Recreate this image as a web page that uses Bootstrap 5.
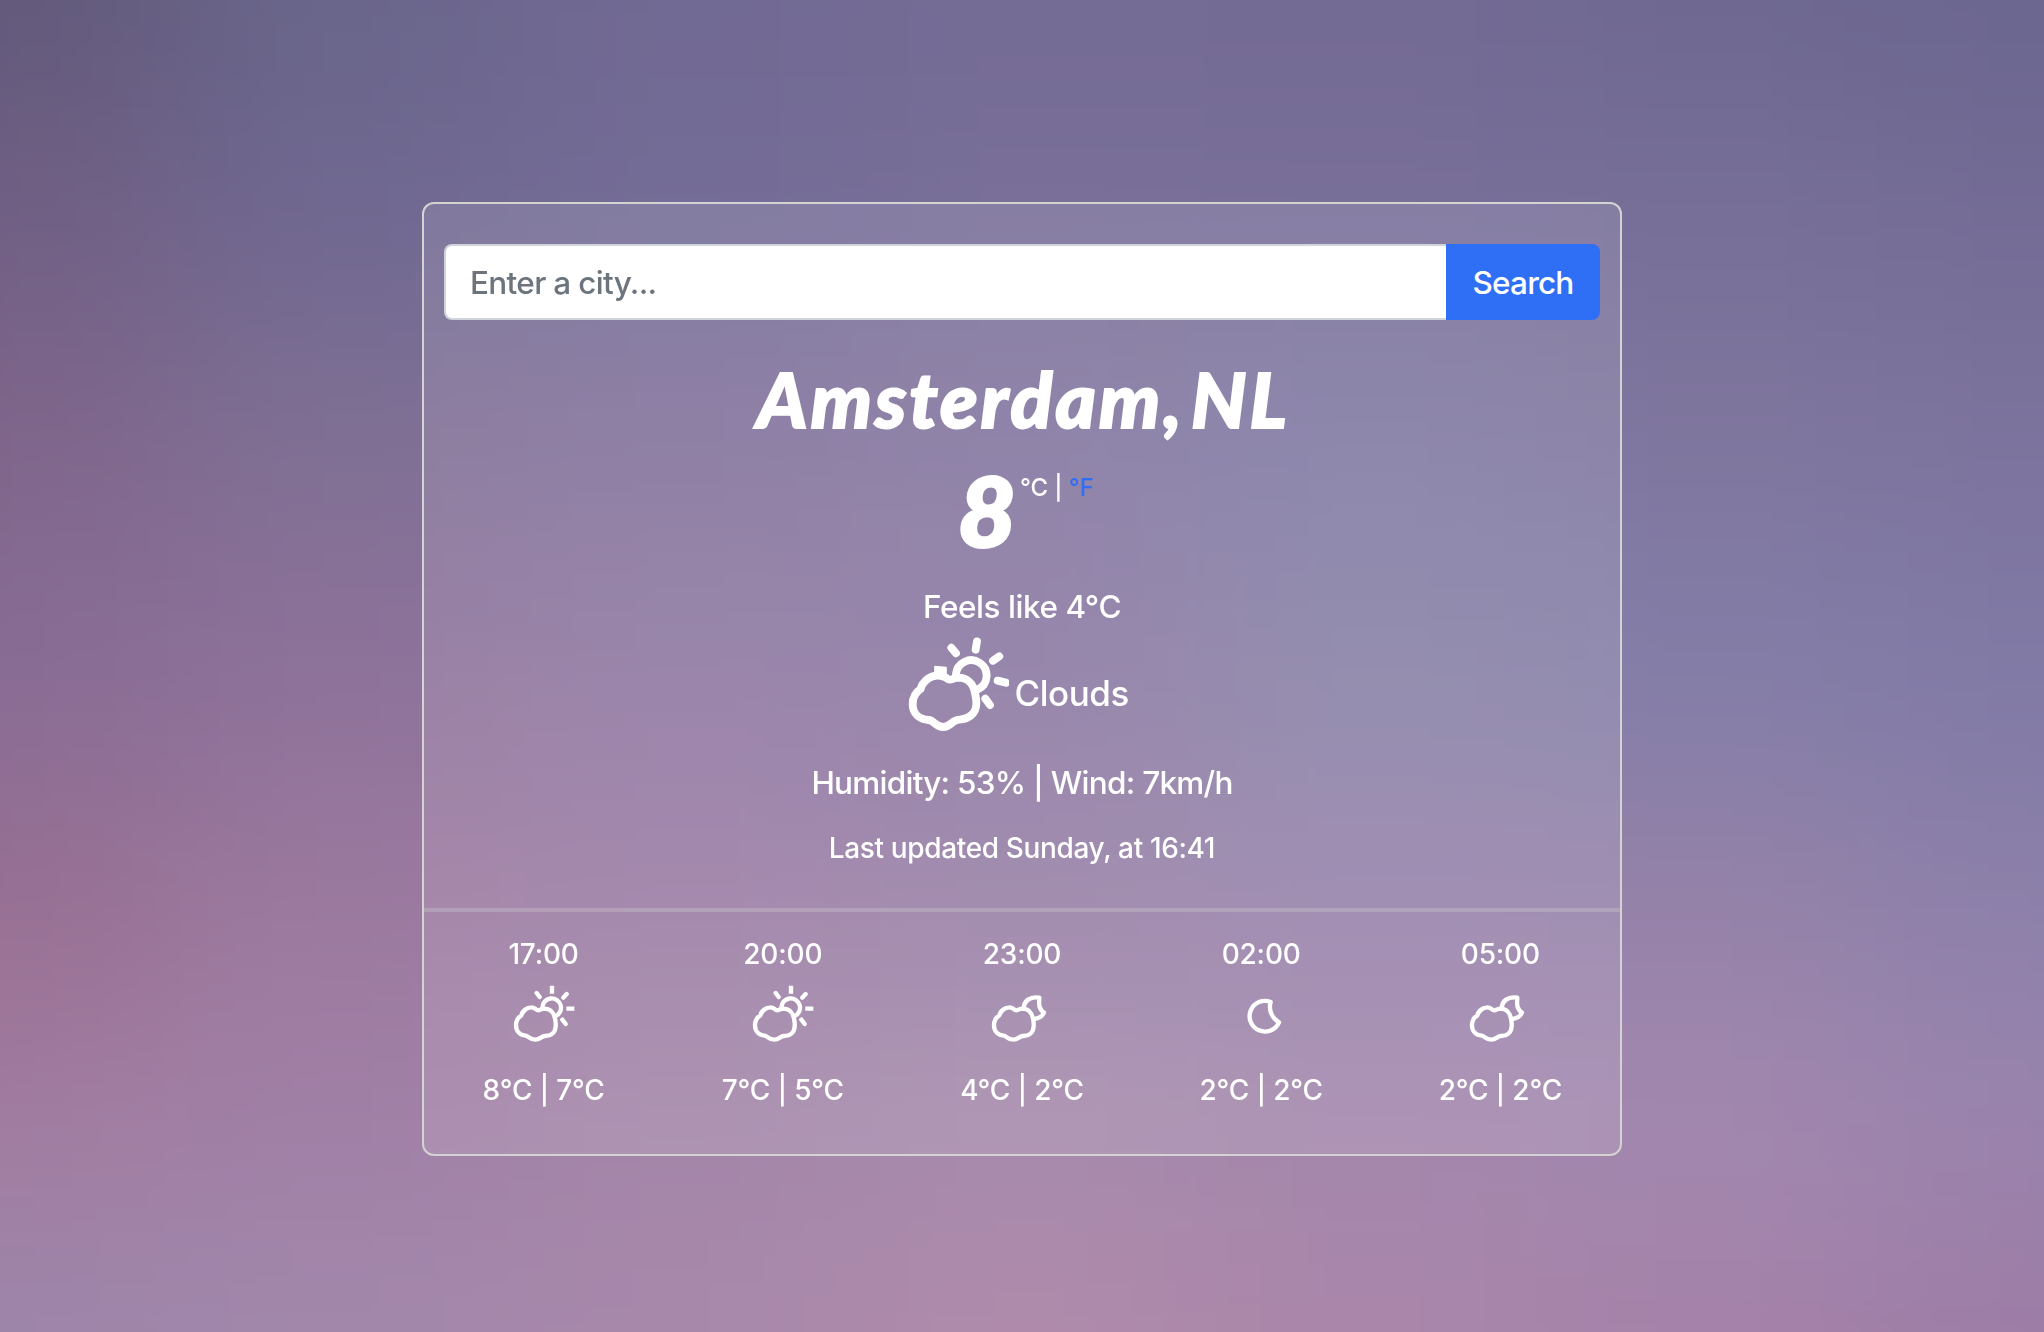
<!DOCTYPE html>
<html lang="en">
<head>
<meta charset="utf-8">
<meta name="viewport" content="width=device-width, initial-scale=1">
<title>Weather</title>
<link href="https://cdn.jsdelivr.net/npm/bootstrap@5.3.0/dist/css/bootstrap.min.css" rel="stylesheet">
<style>
  html { font-size: 32px; }
  body { font-family: Inter, "Liberation Sans", sans-serif; background: #8576a0; color: #fff; min-height: 100vh; overflow: hidden; font-size: 31.5px; font-weight: 450; line-height: 48px; letter-spacing: -.45px; }
  .sky { position: fixed; inset: 0; width: 100%; height: 100%; z-index: -1; }
  .weather-box { width: 1200px; height: 954px; margin: 202px auto 0; border: 2px solid #d3d3d3; border-radius: 12px; background: rgba(255,255,255,.11); }
  .search-row { margin: 40px 20px 0; width: 1156px; height: 76px; }
  .search-row .form-control { border: 2px solid #ced4da; border-right: 0; border-radius: 8px 0 0 8px; padding: 1px 24px 0; font-size: 31.5px; font-weight: 450; color: #212529; background: #fff; }
  .search-row .form-control::placeholder { color: #6c757d; opacity: 1; letter-spacing: -.68px; }
  .search-row .btn { width: 154px; background: #2f6ff5; border: 0; border-radius: 0 8px 8px 0; padding: 1px 0 0; font-size: 31.5px; font-weight: 450; letter-spacing: -.8px; }
  .city-name { font: italic 900 77px/96px Lato, sans-serif; letter-spacing: 3px; word-spacing: -13px; margin: 30px 0 0 3px; -webkit-text-stroke: 2px #fff; }
  .temp-row { padding-left: 9px; margin-top: 12px; }
  .temp-now { font: italic 900 96px/104px Lato, sans-serif; letter-spacing: 0; -webkit-text-stroke: 3px #fff; transform: scaleX(1.04); }
  .unit-list { font-size: 24px; line-height: 36px; letter-spacing: -.1px; margin: 12px 0 0 5px; }
  .unit-list a { color: #2f6ff5; text-decoration: none; }
  .feels { margin-top: 21px; }
  .sky-now { margin-top: 6px; padding-right: 7px; gap: 5px; }
  .sky-now svg { width: 101.3px; height: 96px; }
  .sky-word { font-size: 35px; margin-top: 32px; }
  .meta-air { margin-top: 26px; letter-spacing: -.75px; }
  .meta-time { font-size: 28px; line-height: 42px; margin-top: 20px; letter-spacing: -.36px; }
  .split-line { height: 4px; margin: 39px 0 0; border: 0; background: #d3d3d3; opacity: .3; flex: none; }
  .slots { margin-top: 21px; font-size: 28px; line-height: 42px; letter-spacing: -.2px; }
  .slots svg { width: 70px; height: 70px; margin: 5px auto 19px; }
  .stroke-icon { display: block; fill: none; stroke: #fff; stroke-width: 13; stroke-linecap: round; stroke-linejoin: round; filter: blur(.75px); }
  .stroke-wide { stroke-width: 23.5; }
</style>
<script src="https://cdn.jsdelivr.net/npm/bootstrap@5.3.0/dist/js/bootstrap.bundle.min.js"></script>
</head>
<body>
<svg class="sky" viewBox="0 0 1568 1022" preserveAspectRatio="none" aria-hidden="true">
  <defs>
    <filter id="soft" x="-10%" y="-10%" width="120%" height="120%" color-interpolation-filters="sRGB"><feGaussianBlur stdDeviation="75"/></filter>
    <symbol id="cloud" viewBox="0 0 210 210" overflow="visible">
      <path d="M80 87C72 81 59 81 50 88C41 94 38 101 37 106C27 112 21 122 21 136C21 154 33 166 50 167C58 168 63 179 79 179C94 179 97 168 108 168C128 168 139 156 140 139C141 128 139 123 138 115C135 97 123 86 105 86C96 87 92 91 88 91C84 91 82 89 80 87Z"/>
    </symbol>
    <symbol id="sun-cloud" viewBox="0 0 210 210">
      <use href="#cloud" width="210" height="210"/>
      <path d="M100 83A28 28 0 1 1 139 109M83 39L92 51M173 42L163 53M160 119L170 132"/>
      <path d="M129 17V41M172 86H196" stroke-linecap="butt"/>
    </symbol>
    <symbol id="moon-cloud" viewBox="0 0 210 210">
      <use href="#cloud" width="210" height="210"/>
      <path d="M110 82C112 64 128 48 157 53C155 75 156 88 171 98C165 111 153 116 141 117"/>
    </symbol>
    <symbol id="moon" viewBox="0 0 210 210">
      <path d="M134 66C127 90 137 114 159 127A46 46 0 1 1 134 66Z"/>
    </symbol>
  </defs>
  <g id="patches" filter="url(#soft)"></g>
</svg>
<main class="weather-box d-flex flex-column text-center">
  <form class="input-group search-row flex-nowrap">
    <input type="text" class="form-control" placeholder="Enter a city..." aria-label="City">
    <button class="btn btn-primary" type="button">Search</button>
  </form>
  <h1 class="city-name">Amsterdam, NL</h1>
  <div class="temp-row d-flex justify-content-center align-items-start">
    <div class="temp-now">8</div>
    <div class="unit-list">°C | <a href="#">°F</a></div>
  </div>
  <div class="feels">Feels like 4°C</div>
  <div class="sky-now d-flex justify-content-center align-items-start">
    <svg class="stroke-icon stroke-wide" viewBox="84 200 304 288">
      <path d="M198 322C182 313 160 313 144 325C130 336 124 346 122 356C106 366 98 380 98 402C98 430 118 447 146 449C162 450 166 470 190 470C214 470 215 448 238 448C268 446 288 428 289 402C290 386 287 380 285 368C280 340 262 322 235 322C222 323 217 328 209 328C204 328 202 325 198 322Z"/>
      <path d="M228 312A46 46 0 1 1 294 357M214 232L228 249M291 213L287 238M339 271L358 258M353 331L378 337M316 385L330 404"/>
      <path d="M165 289L198 292V310H165Z" fill="#fff" stroke-width="5"/>
    </svg>
    <div class="sky-word">Clouds</div>
  </div>
  <div class="meta-air">Humidity: 53% | Wind: 7km/h</div>
  <div class="meta-time">Last updated Sunday, at 16:41</div>
  <hr class="split-line">
  <div class="slots row g-0 row-cols-5">
    <div class="col">17:00<svg class="stroke-icon"><use href="#sun-cloud"/></svg>8°C | 7°C</div>
    <div class="col">20:00<svg class="stroke-icon"><use href="#sun-cloud"/></svg>7°C | 5°C</div>
    <div class="col">23:00<svg class="stroke-icon"><use href="#moon-cloud"/></svg>4°C | 2°C</div>
    <div class="col">02:00<svg class="stroke-icon"><use href="#moon"/></svg>2°C | 2°C</div>
    <div class="col">05:00<svg class="stroke-icon"><use href="#moon-cloud"/></svg>2°C | 2°C</div>
  </div>
</main>
<script>
  // Sky colours on a 7 by 7 grid, blended by the blur filter
  const rows = [
    ["61597a","69658a","716993","746b95","736a94","6e6890","6a6690"],
    ["715f84","706891","736d97","796f98","796f99","776f98","746c95"],
    ["80658a","807094","82709a","8375a0","807aa3","80769e","7d749e"],
    ["886c95","8d7199","8e77a1","8b78a1","8680a6","827ea8","807aa6"],
    ["976f92","9b799e","9a7aa3","967ea5","9581aa","9481a8","8b80a9"],
    ["a27ca0","a17fa6","a386a9","a58aac","a387ac","a288af","9984ae"],
    ["9c86aa","a288ab","a888ab","b08aab","aa86aa","a581a8","9d7ca5"]];
  const g = document.getElementById("patches");
  const W = 1568 / 6, H = 1022 / 6;
  for (let r = -1; r <= 7; r++) for (let c = -1; c <= 7; c++) {
    const e = document.createElementNS("http://www.w3.org/2000/svg", "rect");
    e.setAttribute("x", (c - .5) * W); e.setAttribute("y", (r - .5) * H);
    e.setAttribute("width", W + 1); e.setAttribute("height", H + 1);
    e.setAttribute("fill", "#" + rows[Math.min(6, Math.max(0, r))][Math.min(6, Math.max(0, c))]);
    g.appendChild(e);
  }
</script>
</body>
</html>
